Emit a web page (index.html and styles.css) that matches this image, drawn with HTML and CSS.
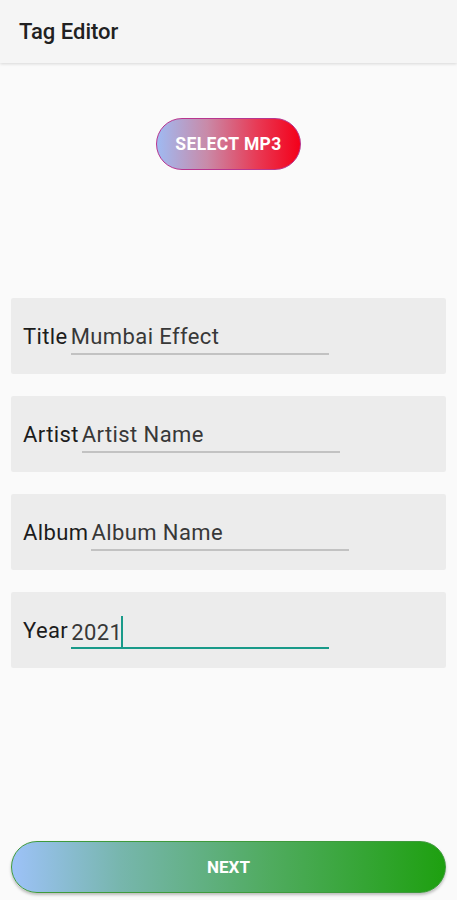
FILE: index.html
```html
<!doctype html>
<html lang="en">
<head>
	<meta charset="UTF-8" />
	<title>Tag Editor</title>
	<link rel="stylesheet" href="styles.css">
</head>
<body>
	<div class="page">
		<div class="appbar">Tag Editor</div>

		<div class="select_wrap">
			<button class="btn_select">SELECT MP3</button>
		</div>

		<div class="fields">
			<div class="field">
				<span class="label">Title</span>
				<div class="input">Mumbai Effect</div>
			</div>
			<div class="field">
				<span class="label">Artist</span>
				<div class="input">Artist Name</div>
			</div>
			<div class="field">
				<span class="label">Album</span>
				<div class="input">Album Name</div>
			</div>
			<div class="field">
				<span class="label">Year</span>
				<div class="input focus">2021<span class="caret"></span></div>
			</div>
		</div>

		<div class="footer">
			<button class="btn_next">NEXT</button>
		</div>
	</div>
</body>
</html>
```

FILE: styles.css
```css
html, body {margin:0; padding:0; background:#fafafa;}
body {font-family:Roboto, "Liberation Sans", sans-serif; color:#212121;}
.page {display:flex; flex-direction:column; height:100vh; box-sizing:border-box;}

.appbar {height:63px; background:#f5f5f5; box-shadow:0 1px 3px rgba(0,0,0,0.14); display:flex; align-items:center; padding-left:19px; font-size:22px; font-weight:500; position:relative; z-index:1;}

.select_wrap {display:flex; justify-content:center; padding-top:55px;}
.btn_select {width:145px; height:52px; border-radius:26px; border:1px solid #b8358f; background:linear-gradient(to right, #9fbaf2 0%, #c98aa8 35%, #e83a55 70%, #f4001a 100%); color:#fff; font-family:Roboto, "Liberation Sans", sans-serif; font-size:17.5px; font-weight:700; letter-spacing:0.4px; padding:0; cursor:pointer;}

.fields {display:flex; flex-direction:column; gap:22px; margin:128px 11px 0;}
.field {height:76px; background:#ececec; border-radius:2px; display:flex; align-items:flex-start; padding:24px 0 0 12px; box-sizing:border-box; font-size:22px; line-height:29px; letter-spacing:0.4px;}
.label {color:#1c1c1c;}
.input {width:258px; margin-left:3px; height:33px; border-bottom:2px solid #c2c2c2; color:#383838; box-sizing:border-box; white-space:nowrap;}
.input.focus {border-bottom-color:#199a89;}
.caret {display:inline-block; width:2px; height:31px; background:#199a89; vertical-align:-7px; margin-left:-1px;}

.footer {margin-top:auto; padding:0 11px 7px;}
.btn_next {width:100%; height:52px; border-radius:26px; border:1px solid #3e9a3c; background:linear-gradient(to right, #9dc2f8 0%, #77b6ad 25%, #4fab5e 60%, #1ea010 100%); box-shadow:0 2px 3px rgba(0,0,0,0.25); color:#fff; font-family:Roboto, "Liberation Sans", sans-serif; font-size:17px; font-weight:700; padding:0; cursor:pointer;}
```
